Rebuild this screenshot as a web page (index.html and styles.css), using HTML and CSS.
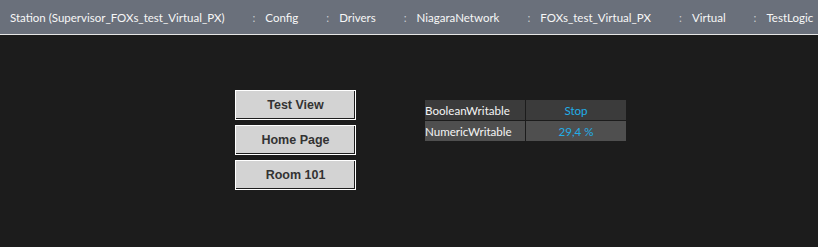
FILE: index.html
```html
<!DOCTYPE html>
<html>
<head>
<meta charset="utf-8">
<link rel="stylesheet" href="styles.css">
</head>
<body>
<nav class="crumbs">
  <span class="crumb">Station (Supervisor_FOXs_test_Virtual_PX)</span><span class="sep">:</span>
  <span class="crumb">Config</span><span class="sep">:</span>
  <span class="crumb">Drivers</span><span class="sep">:</span>
  <span class="crumb">NiagaraNetwork</span><span class="sep">:</span>
  <span class="crumb">FOXs_test_Virtual_PX</span><span class="sep">:</span>
  <span class="crumb">Virtual</span><span class="sep">:</span>
  <span class="crumb">TestLogic</span>
</nav>
<main class="canvas">
  <div class="buttons">
    <button class="btn">Test View</button>
    <button class="btn">Home Page</button>
    <button class="btn">Room 101</button>
  </div>
  <div class="table">
    <div class="row r1"><span class="label">BooleanWritable</span><span class="value">Stop</span></div>
    <div class="row r2"><span class="label">NumericWritable</span><span class="value">29,4 %</span></div>
  </div>
</main>
</body>
</html>
```
FILE: styles.css
```css
html, body { margin: 0; padding: 0; }
body {
  background: #1c1c1c;
  width: 818px;
  height: 247px;
  overflow: hidden;
  font-family: Lato, "Noto Sans", sans-serif;
}
.crumbs {
  display: flex;
  align-items: center;
  height: 35px;
  padding: 1px 0 0 10px;
  box-sizing: border-box;
  background: #6a707b;
  border-bottom: 1px solid #e6e6e6;
  color: #f7f7f7;
  font-size: 11.5px;
  white-space: nowrap;
}
.sep {
  margin: 0 10px 0 28px;
  color: #c9ccd1;
}
.canvas {
  display: flex;
  align-items: flex-start;
  padding: 55px 0 0 235px;
}
.buttons {
  display: flex;
  flex-direction: column;
  gap: 5px;
}
.btn {
  box-sizing: border-box;
  width: 121px;
  height: 30px;
  margin: 0;
  padding: 0;
  background: #d3d3d3;
  border: 1px solid #ffffff;
  box-shadow: inset -1px -1px 0 #1c1c1c;
  color: #333333;
  font-family: "Liberation Sans", Arial, sans-serif;
  font-weight: bold;
  font-size: 12.5px;
}
.table {
  margin: 10px 0 0 69px;
  display: flex;
  flex-direction: column;
  gap: 1px;
  font-size: 11.6px;
}
.row {
  display: flex;
  height: 20px;
  gap: 1px;
}
.label, .value {
  display: flex;
  align-items: center;
  width: 100px;
}
.label { color: #f4f4f4; }
.value { justify-content: center; color: #22aee8; }
.r1 .label, .r1 .value { background: #3b3b3b; }
.r2 .label, .r2 .value { background: #4f4f4f; }
```
